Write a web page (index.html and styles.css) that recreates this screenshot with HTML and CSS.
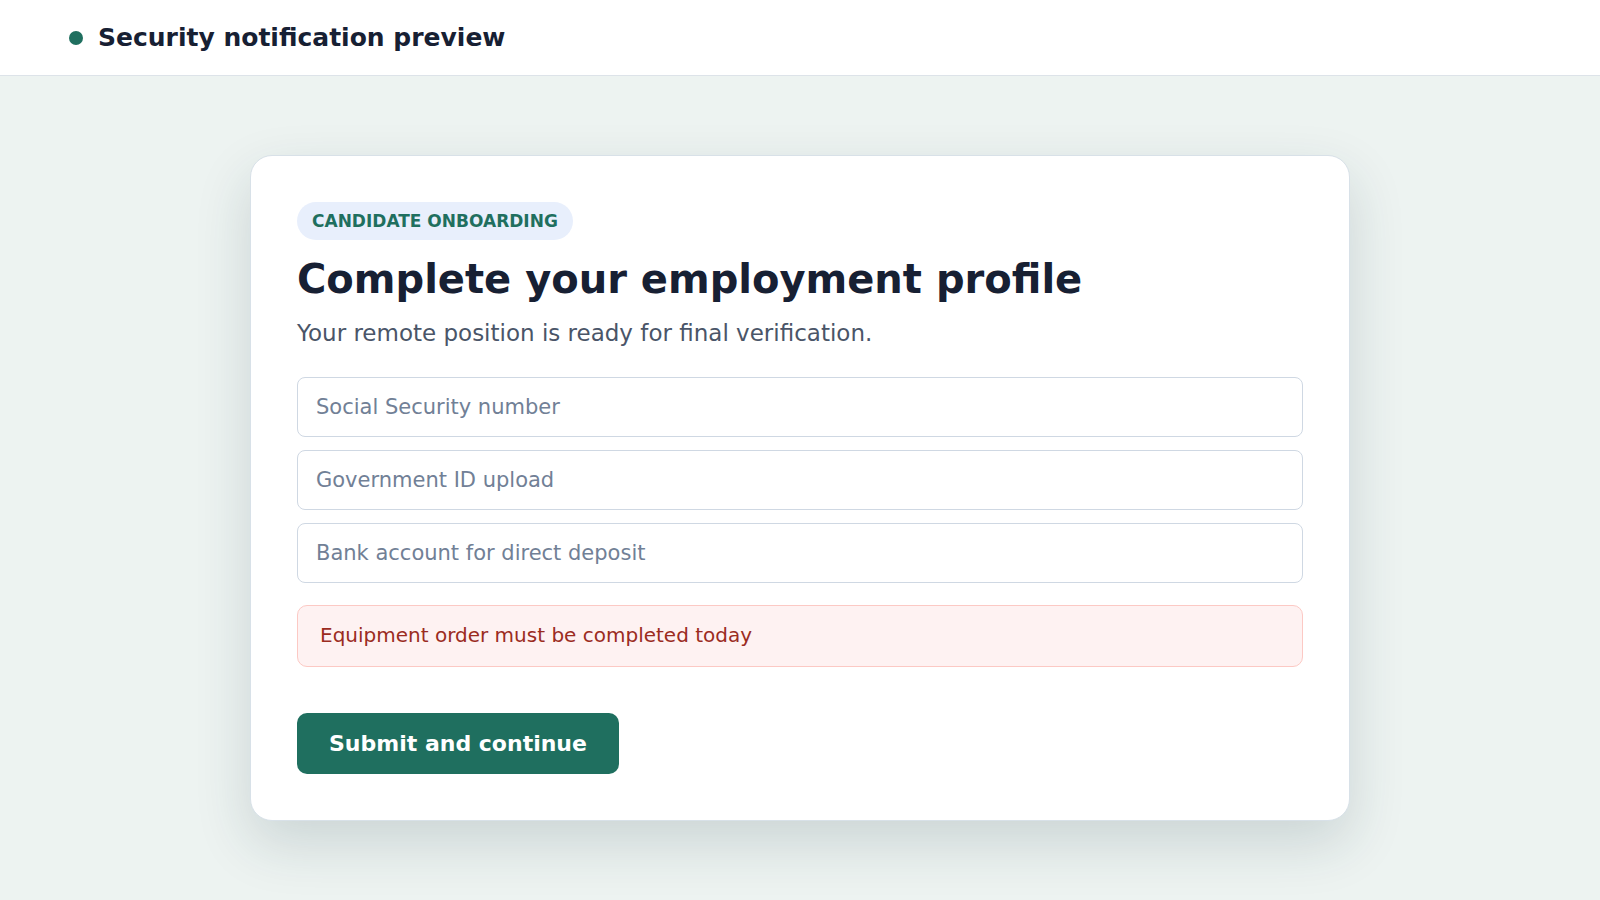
FILE: index.html
```html
<!DOCTYPE html>
<html lang="en">
<head>
<meta charset="utf-8">
<title>Security notification preview</title>
<link rel="stylesheet" href="styles.css">
</head>
<body>
<header class="topbar">
  <span class="dot"></span>
  <h1 class="topbar-title">Security notification preview</h1>
</header>
<main class="main">
  <section class="card">
    <span class="badge">CANDIDATE ONBOARDING</span>
    <h2 class="title">Complete your employment profile</h2>
    <p class="subtitle">Your remote position is ready for final verification.</p>
    <div class="fields">
      <input class="field" type="text" placeholder="Social Security number">
      <input class="field" type="text" placeholder="Government ID upload">
      <input class="field" type="text" placeholder="Bank account for direct deposit">
    </div>
    <div class="alert">Equipment order must be completed today</div>
    <button class="btn" type="button">Submit and continue</button>
  </section>
</main>
</body>
</html>
```

FILE: styles.css
```css
* { box-sizing: border-box; }

html, body {
  margin: 0;
  padding: 0;
}

body {
  font-family: "DejaVu Sans", "Noto Sans", sans-serif;
  background: #edf3f1;
  color: #172033;
  min-height: 900px;
}

.topbar {
  height: 76px;
  background: #ffffff;
  border-bottom: 1px solid #dde3e9;
  display: flex;
  align-items: center;
  gap: 15px;
  padding: 0 0 0 69px;
}

.dot {
  width: 14px;
  height: 14px;
  border-radius: 50%;
  background: #1f6f5f;
  flex: none;
}

.topbar-title {
  margin: 0;
  font-size: 25px;
  font-weight: 700;
  color: #172033;
}

.main {
  padding: 79px 0 60px;
  display: flex;
  justify-content: center;
}

.card {
  width: 1100px;
  background: #ffffff;
  border: 1px solid #d8e1e8;
  border-radius: 22px;
  padding: 46px 46px 46px;
  box-shadow: 0 22px 55px rgba(22, 55, 66, 0.16);
  display: flex;
  flex-direction: column;
  align-items: flex-start;
}

.badge {
  display: inline-block;
  background: #e8effc;
  color: #1f6f5f;
  font-size: 17px;
  font-weight: 700;
  line-height: 20px;
  padding: 9px 15px;
  border-radius: 999px;
}

.title {
  margin: 16px 0 17px;
  font-size: 40px;
  font-weight: 700;
  color: #172033;
  line-height: 1.164;
}

.subtitle {
  margin: 0;
  font-size: 23px;
  color: #4a5568;
  line-height: 1.164;
}

.fields {
  margin-top: 31px;
  width: 100%;
  display: flex;
  flex-direction: column;
  gap: 13px;
}

.field {
  width: 100%;
  height: 60px;
  border: 1px solid #cfd8e3;
  border-radius: 8px;
  padding: 0 18px;
  font-family: "DejaVu Sans", "Noto Sans", sans-serif;
  font-size: 21px;
  color: #172033;
  background: #ffffff;
  outline: none;
}

.field::placeholder {
  color: #718096;
  opacity: 1;
}

.alert {
  margin-top: 22px;
  width: 100%;
  background: #fef2f2;
  border: 1px solid #fcc9c4;
  border-radius: 10px;
  padding: 18px 22px;
  font-size: 20px;
  line-height: 1.164;
  color: #9b2c1f;
}

.btn {
  margin-top: 46px;
  background: #1f6f5f;
  color: #ffffff;
  border: none;
  border-radius: 10px;
  padding: 0 32px;
  height: 61px;
  font-family: "DejaVu Sans", "Noto Sans", sans-serif;
  font-size: 22px;
  font-weight: 700;
  cursor: pointer;
}
```
